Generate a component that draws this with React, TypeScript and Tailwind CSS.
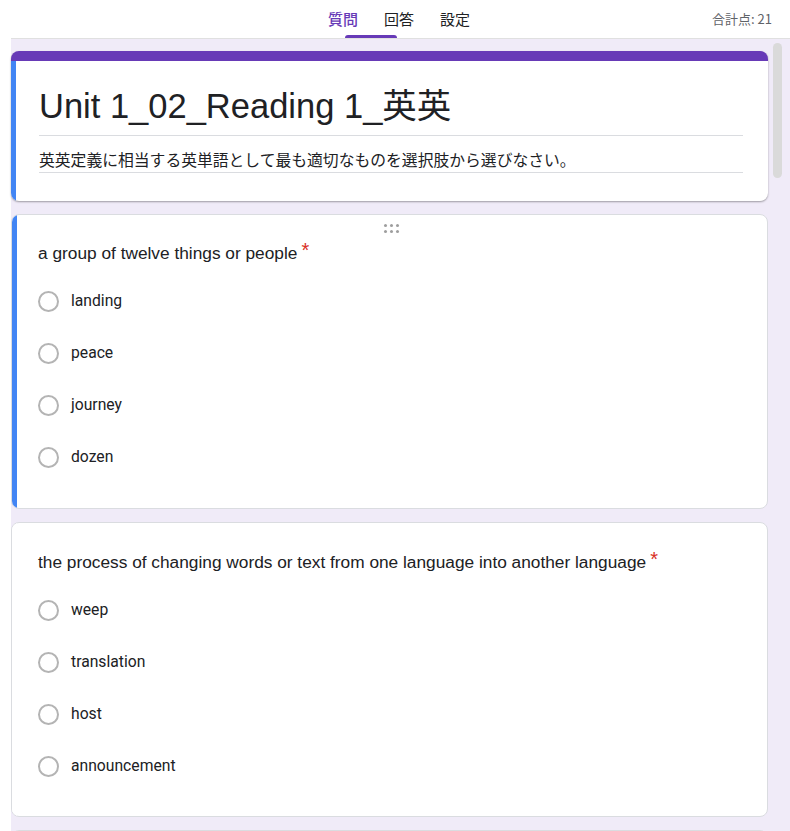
const QUESTIONS = [
  {
    text: "a group of twelve things or people",
    options: ["landing", "peace", "journey", "dozen"],
    active: true,
  },
  {
    text: "the process of changing words or text from one language into another language",
    options: ["weep", "translation", "host", "announcement"],
    active: false,
  },
];

const DragHandle = () => (
  <div className="h-[8px] flex justify-center">
    <div className="grid grid-cols-3 gap-x-[3px] gap-y-[3px]">
      {Array.from({ length: 6 }).map((_, i) => (
        <div key={i} className="w-[3px] h-[3px] rounded-full bg-[#9e9e9e]" />
      ))}
    </div>
  </div>
);

const QuestionCard = ({ text, options, active }: { text: string; options: string[]; active: boolean }) => (
  <div className="flex bg-white rounded-lg border border-[#dadce0] overflow-hidden">
    {/* Active strip */}
    <div className={active ? "w-[5px] shrink-0 bg-[#4285f4]" : "w-[5px] shrink-0 bg-white"} />
    <div className={active ? "flex-1 pl-[21px] pr-[22px] pt-[9px] pb-[25px]" : "flex-1 pl-[21px] pr-[22px] pt-[26px] pb-[24px]"}>
      {active && <DragHandle />}
      <div
        className={active ? "mt-[8px] text-[17.3px] leading-[24px] text-[#202124]" : "text-[17.3px] leading-[24px] text-[#202124]"}
        style={{ fontFamily: '"Liberation Sans", Arial, sans-serif' }}
      >
        {text}
        <span className="text-[#d93025] text-[20px] ml-[4px] relative top-[-2px]">*</span>
      </div>
      <div className="mt-[10px] flex flex-col">
        {options.map((opt) => (
          <div key={opt} className="h-[52px] flex items-center gap-[12px]">
            <div className="w-[21px] h-[21px] rounded-full border-2 border-[#b4b4b4]" />
            <span className="text-[15.7px] text-[#202124]" style={{ fontFamily: "Roboto, sans-serif" }}>
              {opt}
            </span>
          </div>
        ))}
      </div>
    </div>
  </div>
);

export default function App() {
  return (
    <div
      className="w-[790px] h-[831px] overflow-hidden bg-white flex flex-col"
      style={{ fontFamily: 'Roboto, "Noto Sans CJK JP", sans-serif' }}
    >
      {/* ── Top bar ── */}
      <div className="relative h-[38px] shrink-0 flex items-center">
        <div className="w-[328px] shrink-0" />
        <div className="flex gap-[26px] text-[15px]" style={{ fontFamily: '"Noto Sans CJK JP", sans-serif' }}>
          <span className="text-[#673ab7] font-medium">質問</span>
          <span className="text-[#202124]">回答</span>
          <span className="text-[#202124]">設定</span>
        </div>
        <div className="ml-auto pr-[18px] text-[13px] text-[#5f6368]" style={{ fontFamily: '"Noto Sans CJK JP", sans-serif' }}>
          合計点: 21
        </div>
        <div className="absolute bottom-0 left-[345px] w-[52px] h-[3px] rounded-t-[3px] bg-[#673ab7]" />
      </div>

      {/* ── Body ── */}
      <div className="flex-1 ml-[11px] bg-[#f0ebf8] border-t border-[#e0e0e0] flex">
        <div className="w-[757px] shrink-0 pt-[12px] flex flex-col gap-[13px]">
          {/* Title card */}
          <div className="bg-white rounded-lg border-t-[10px] border-[#673ab7] overflow-hidden shadow-[0_1px_2px_rgba(0,0,0,0.35)] flex">
            <div className="w-[5px] shrink-0 bg-[#4285f4]" />
            <div className="flex-1 pl-[23px] pr-[25px] pt-[25px] pb-[28px]">
              <div
                className="text-[34.5px] leading-[40px] text-[#202124] pb-[9px] border-b border-[#dadce0]"
                style={{ fontFamily: '"Liberation Sans", Arial, "Noto Sans CJK JP", sans-serif' }}
              >
                Unit 1_02_Reading 1_英英
              </div>
              <div
                className="mt-[14px] text-[15.8px] leading-[20px] text-[#202124] pb-[2px] border-b border-[#dadce0]"
                style={{ fontFamily: '"Noto Sans CJK JP", sans-serif' }}
              >
                英英定義に相当する英単語として最も適切なものを選択肢から選びなさい。
              </div>
            </div>
          </div>

          <div className="flex flex-col gap-[13px]">
            {QUESTIONS.map((q) => (
              <QuestionCard key={q.text} {...q} />
            ))}
            <div className="h-[40px] bg-white rounded-lg border border-[#dadce0]" />
          </div>
        </div>

        {/* Scrollbar */}
        <div className="ml-[5px] pt-[4px]">
          <div className="w-[9px] h-[135px] rounded-full bg-[#dadada]" />
        </div>
      </div>
    </div>
  );
}
